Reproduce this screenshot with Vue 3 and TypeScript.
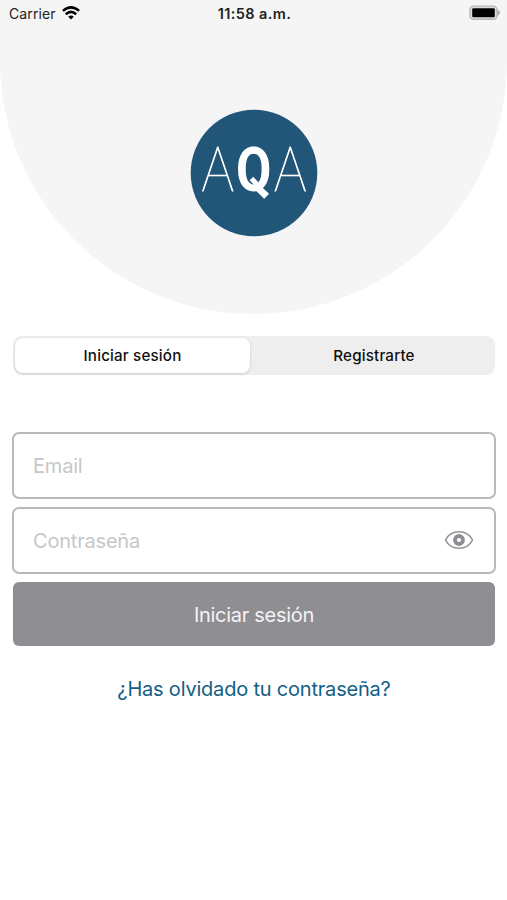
<script setup lang="ts">
import { ref } from 'vue'

type Tab = 'login' | 'register'

const tabs: { id: Tab; label: string }[] = [
  { id: 'login', label: 'Iniciar sesión' },
  { id: 'register', label: 'Registrarte' },
]
const activeTab = ref<Tab>('login')
const email = ref('')
const password = ref('')
const showPassword = ref(false)
</script>

<template>
  <main class="screen">
    <header class="hero">
      <div class="status">
        <div class="carrier">
          <span>Carrier</span>
          <svg class="wifi" viewBox="0 0 18 14" aria-hidden="true">
            <g fill="none" stroke="#000" stroke-width="2.5">
              <path d="M0.9 4.9Q9-2.1 17.1 4.9" />
              <path d="M3.8 8.2Q9 3.6 14.2 8.2" />
            </g>
            <path d="M6.2 10.7Q9 8.1 11.8 10.7L9 13.6Z" />
          </svg>
        </div>
        <span class="time">11:58 a.m.</span>
        <div class="power">
          <svg class="battery" viewBox="0 0 32 16" aria-hidden="true">
            <path d="M27.4 3.3L30.6 6.4Q31.5 7.7 30.6 9L27.4 12Z" fill="#b0b0b0" />
            <rect x="1" y="1.1" width="27" height="13.2" rx="3.6" fill="#dcdcdc" stroke="#b8b8b8" stroke-width="1.4" />
            <rect x="3.2" y="3.3" width="22.6" height="8.9" rx="1.2" />
          </svg>
        </div>
      </div>
      <svg class="logo" viewBox="0 0 128 128" role="img" aria-label="AQA">
        <circle cx="64" cy="64" r="63.3" fill="#215679" />
        <g fill="#fff">
          <text class="thin" x="11.5" y="82" font-size="61" textLength="32.5" lengthAdjust="spacingAndGlyphs">A</text>
          <text class="bold" x="46" y="82" font-size="61" textLength="35.4" lengthAdjust="spacingAndGlyphs">Q</text>
          <text class="thin" x="84" y="82" font-size="61" textLength="32.5" lengthAdjust="spacingAndGlyphs">A</text>
        </g>
        <path d="M61.5 69.5L71 80" fill="none" stroke="#fff" stroke-width="5" />
      </svg>
    </header>

    <nav class="tabs">
      <button
        v-for="tab in tabs"
        :key="tab.id"
        type="button"
        class="tab"
        :class="{ active: activeTab === tab.id }"
        @click="activeTab = tab.id"
      >
        {{ tab.label }}
      </button>
    </nav>

    <form class="form" @submit.prevent>
      <label class="field">
        <input v-model="email" type="text" placeholder="Email" />
      </label>
      <label class="field password">
        <input v-model="password" :type="showPassword ? 'text' : 'password'" placeholder="Contraseña" />
        <button type="button" class="eye" @click="showPassword = !showPassword">
          <svg viewBox="0 0 30 20" aria-hidden="true">
            <path d="M1.5 10C7-1 23-1 28.5 10C23 21 7 21 1.5 10Z" fill="none" stroke="#929296" stroke-width="1.6" />
            <circle cx="15" cy="10" r="4" fill="none" stroke="#8e8e93" stroke-width="3.8" />
          </svg>
        </button>
      </label>
      <button class="submit" type="submit">Iniciar sesión</button>
    </form>

    <a class="forgot">¿Has olvidado tu contraseña?</a>
  </main>
</template>

<style>
body {
  background: #fff;
}
</style>

<style scoped>
.screen {
  width: 507px;
  height: 900px;
  overflow: hidden;
  display: flex;
  flex-direction: column;
  background: #fff;
  font-family: Inter, 'Liberation Sans', sans-serif;
}
button,
input {
  font: inherit;
  border: 0;
  padding: 0;
  margin: 0;
  background: none;
  outline: none;
}
.hero {
  height: 313.5px;
  flex: none;
  background: #f5f5f5;
  border-radius: 0 0 253.5px 253.5px;
  display: flex;
  flex-direction: column;
  align-items: center;
}
.status {
  width: 100%;
  height: 27px;
  box-sizing: border-box;
  padding: 0 6px 0 9px;
  display: grid;
  grid-template-columns: 1fr auto 1fr;
  align-items: center;
  color: #222;
  font-size: 14px;
}
.carrier {
  display: flex;
  align-items: center;
  gap: 6px;
  letter-spacing: 0.1px;
}
.wifi {
  width: 18px;
  height: 14px;
  margin-top: -1px;
}
.time {
  font-weight: 600;
  font-size: 14.5px;
  letter-spacing: 0.4px;
  padding-right: 1px;
}
.power {
  display: flex;
  justify-content: flex-end;
}
.battery {
  width: 32px;
  height: 16px;
  margin-top: -1px;
}
.logo {
  width: 128px;
  height: 128px;
  margin-top: 81.6px;
}
.thin {
  font-family: Lato, sans-serif;
  font-weight: 100;
  stroke: #fff;
  stroke-width: 1.1px;
}
.bold {
  font-family: Roboto, sans-serif;
  font-weight: 700;
}
.tabs {
  height: 39px;
  flex: none;
  box-sizing: border-box;
  margin: 22px 12px 0 13px;
  padding: 2px;
  border-radius: 9px;
  background: #eee;
  display: grid;
  grid-template-columns: 235px 1fr;
  column-gap: 5px;
}
.tab {
  border-radius: 8px;
  color: #111;
  font-size: 15.2px;
  font-weight: 500;
  letter-spacing: 0.16px;
}
.tab.active {
  background: #fff;
  box-shadow: 0 1px 3px rgba(0, 0, 0, 0.16);
}
.form {
  margin: 57px 11px 0 12px;
  display: flex;
  flex-direction: column;
}
.field {
  height: 67px;
  box-sizing: border-box;
  border: 2px solid #b9b9b9;
  border-radius: 7px;
  padding: 0 20px 0 19px;
  display: flex;
  align-items: center;
}
.password {
  margin-top: 8px;
}
.field input {
  flex: 1;
  min-width: 0;
  font-size: 20px;
  letter-spacing: -0.2px;
  padding-top: 1px;
}
.field input::placeholder {
  color: #c7c7c9;
  opacity: 1;
}
.eye {
  width: 30px;
  height: 20px;
}
.eye svg {
  display: block;
  width: 30px;
  height: 20px;
}
.submit {
  height: 64px;
  margin: 8.5px 1px 0;
  padding-top: 1px;
  border-radius: 6px;
  background: #8e8e93;
  color: #f4f4f4;
  font-size: 20px;
  letter-spacing: -0.28px;
}
.forgot {
  margin-top: 30px;
  align-self: center;
  padding-left: 1px;
  color: #126085;
  font-size: 20px;
  line-height: 26px;
  letter-spacing: -0.2px;
}
</style>
